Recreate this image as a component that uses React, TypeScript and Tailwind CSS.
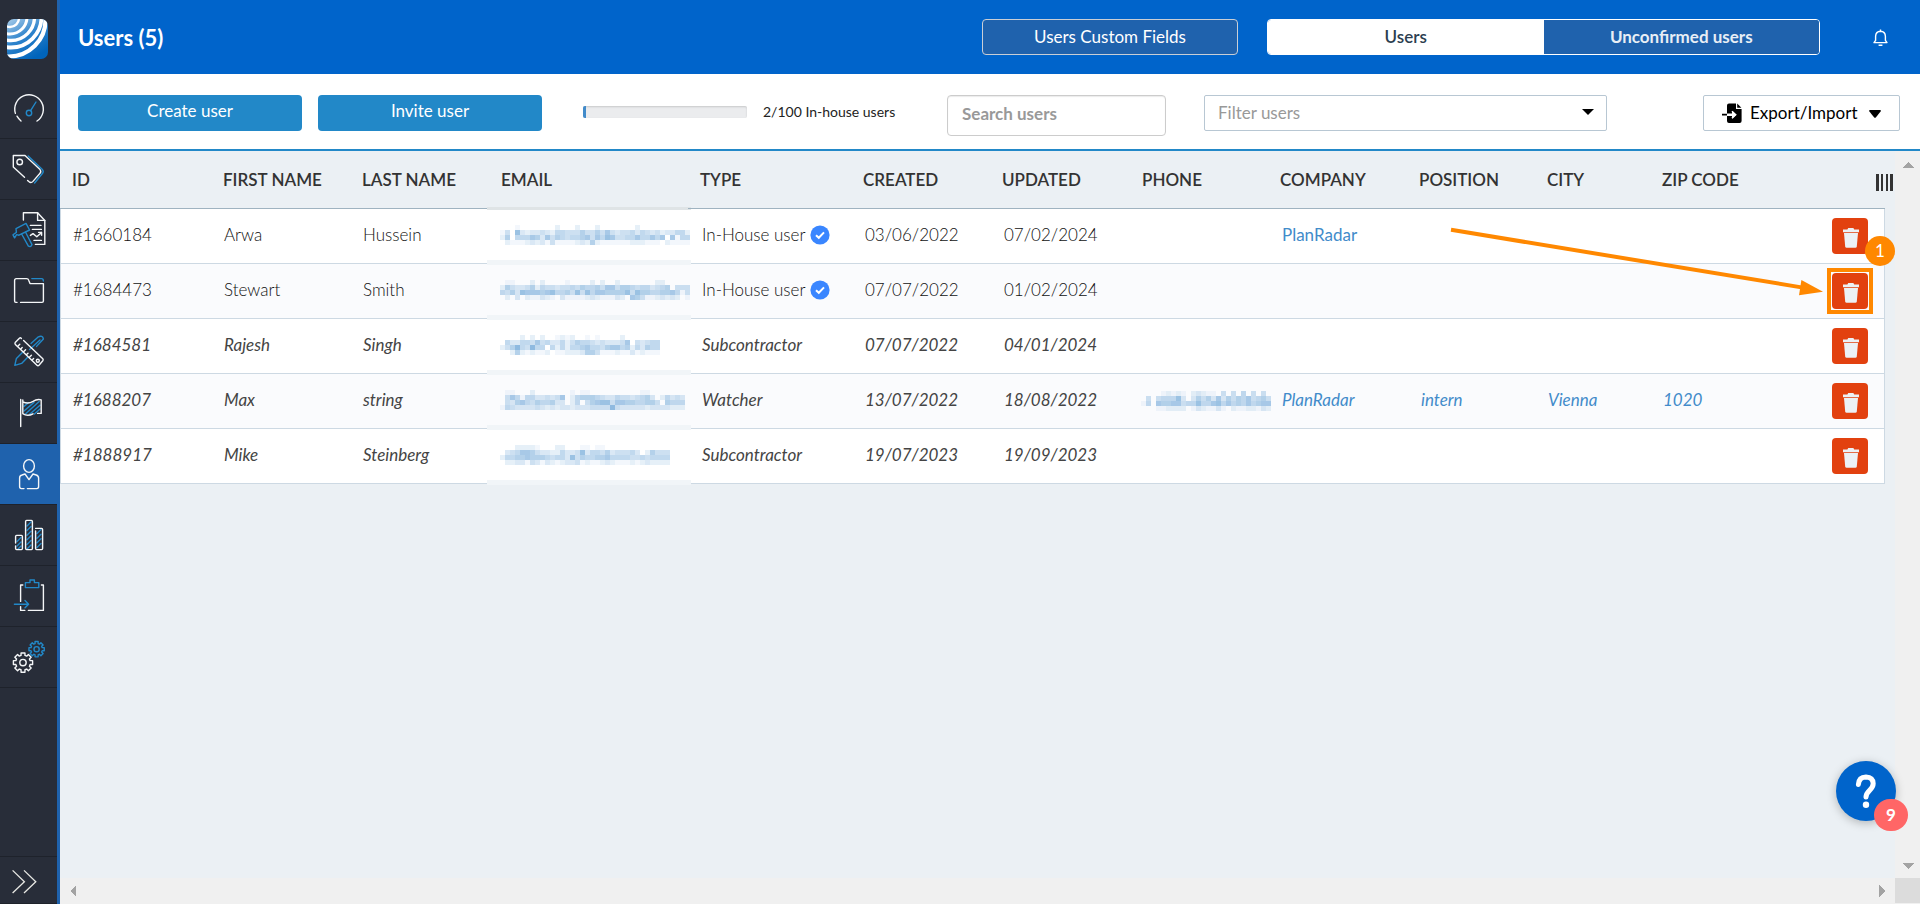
import type { ReactNode } from "react";

type Censored = string[];

type User = {
  id: string;
  firstName: string;
  lastName: string;
  email: Censored;
  type: string;
  created: string;
  updated: string;
  phone?: Censored;
  company?: string;
  position?: string;
  city?: string;
  zip?: string;
  active: boolean;
};

const users: User[] = [
  {
    id: "#1660184",
    firstName: "Arwa",
    lastName: "Hussein",
    email: [
      "00010000000200020002000000020000000000",
      "14083233432554446446474344535434233552",
      "26055576374654556747587445575575707155",
      "02111232314111123262111111222111021111",
    ],
    type: "In-House user",
    created: "03/06/2022",
    updated: "07/02/2024",
    company: "PlanRadar",
    active: true,
  },
  {
    id: "#1684473",
    firstName: "Stewart",
    lastName: "Smith",
    email: [
      "01100020200001000020200200000002200000",
      "26433462544344546556477466545534560444",
      "54638777678556484857766668486655667514",
      "02030211321031111232111320764112323201",
    ],
    type: "In-House user",
    created: "07/07/2022",
    updated: "01/02/2024",
    active: true,
  },
  {
    id: "#1684581",
    firstName: "Rajesh",
    lastName: "Singh",
    email: [
      "00002020200121200101000020000000",
      "05335547453352465543433347043455",
      "24695495505252556755467756253655",
      "00262121120112223664111211312111",
    ],
    type: "Subcontractor",
    created: "07/07/2022",
    updated: "04/01/2024",
    active: false,
  },
  {
    id: "#1688207",
    firstName: "Max",
    lastName: "string",
    email: [
      "0110002000000010110000000000110000000",
      "0475155334347025666543354434563025343",
      "0436754655633025046788477665566406555",
      "1543333432323323334444943333323333222",
    ],
    type: "Watcher",
    created: "13/07/2022",
    updated: "18/08/2022",
    phone: [
      "00001212102321104040504040",
      "04045558303646373646574564",
      "15076677455855785756575677",
      "00011222201321131021122132",
    ],
    company: "PlanRadar",
    position: "intern",
    city: "Vienna",
    zip: "1020",
    active: false,
  },
  {
    id: "#1888917",
    firstName: "Mike",
    lastName: "Steinberg",
    email: [
      "0002222100022000110110000000000000",
      "0345776433225334835546344453026444",
      "2556676665455384655667555544545555",
      "0223314313212334121123211121232222",
    ],
    type: "Subcontractor",
    created: "19/07/2023",
    updated: "19/09/2023",
    active: false,
  },
];

const Mosaic = ({ rows }: { rows: Censored }) => (
  <svg
    width={rows[0].length * 5}
    height={rows.length * 5}
    shapeRendering="crispEdges"
    fill="#8fbae0"
    aria-hidden="true"
  >
    {rows.map((row, y) =>
      row
        .split("")
        .map((value, x) =>
          value === "0" ? null : (
            <rect key={`${x}-${y}`} x={x * 5} y={y * 5} width="5" height="5" opacity={Number(value) / 9} />
          )
        )
    )}
  </svg>
);

const gear = (cx: number, cy: number, outer: number, inner: number) => {
  const points: string[] = [];
  for (let i = 0; i < 8; i++) {
    const angle = (i * Math.PI) / 4;
    [
      [-0.27, inner],
      [-0.2, outer],
      [0.2, outer],
      [0.27, inner],
    ].forEach(([offset, r]) => {
      points.push(`${cx + r * Math.cos(angle + offset)},${cy + r * Math.sin(angle + offset)}`);
    });
  }
  return points.join(" ");
};

const BLUE = "#2288c8";

const Icon = ({ children }: { children: ReactNode }) => (
  <svg
    width="57"
    height="60"
    viewBox="0 0 57 60"
    fill="none"
    stroke="#f4f6f8"
    strokeWidth="1.4"
    strokeLinecap="round"
    strokeLinejoin="round"
    aria-hidden="true"
  >
    {children}
  </svg>
);

const navItems: { label: string; icon: ReactNode }[] = [
  {
    label: "Dashboard",
    icon: (
      <Icon>
        <path d="M37 43A14.3 14.3 0 1 0 15.4 35.4" />
        <path d="M17 38.2Q18.6 41 21 43" />
        <g stroke={BLUE}>
          <circle cx="29" cy="35" r="2.7" />
          <path d="M30.6 32.6L36 24" />
        </g>
      </Icon>
    ),
  },
  {
    label: "Tickets",
    icon: (
      <Icon>
        <path d="M24.5 38.2L13.3 28V16.5H25L40 30.6Q41.6 32.4 40 34.2L33 42.4Q31 44.6 28.8 42.6L27.6 41.4" />
        <circle cx="19.7" cy="23" r="2.8" />
        <path stroke={BLUE} d="M28.2 17L42.4 30.6Q44 32.4 42.6 34.2L34.6 44" />
      </Icon>
    ),
  },
  {
    label: "Reports",
    icon: (
      <Icon>
        <path d="M23.4 20V12.8H37.6L44.8 20.4V44.4H35.4" />
        <path d="M37.6 12.8V20.4H44.8M30.4 25.4H41M32.4 29.4H41.4M34 40.4H41.4M30.4 35.4L33 33.6L36.8 36.8L41.6 32.4M38.6 32.4H41.6V35.2" />
        <g stroke={BLUE}>
          <path d="M16 28.6L26 23.4L29.6 30L19 35.2L16.6 34.6L14.6 37.8L13 34.8L16.4 32.4Z" />
          <path d="M21.6 34L28.4 46.2Q31 47.4 32 44.6L25.6 32.2" />
        </g>
      </Icon>
    ),
  },
  {
    label: "Documents",
    icon: (
      <Icon>
        <path d="M17 41.4H15.8Q14.6 41.4 14.6 40V19.4Q14.6 17.6 16.4 17.6H26.6Q28.2 17.6 28.8 19.4L30 22.6H43.4V40Q43.4 41.4 42 41.4H20.6" />
        <path stroke={BLUE} d="M31.8 17.6H41.6Q43.4 17.6 43.4 20" />
      </Icon>
    ),
  },
  {
    label: "Plans",
    icon: (
      <Icon>
        <path stroke={BLUE} d="M31 21.4L38.4 14.8Q42.6 13 43.4 17L36.6 24.4M22.4 30.6L16.4 36.4L14.8 43.4L21.6 41.4L27.4 35.6M29.6 27.6L40 18" />
        <path d="M15.2 20.6L19.4 16.2Q20.4 15.4 21.4 16.4M23.6 18.6L42.8 36.8Q43.6 37.8 42.8 38.8L39 43.2Q38 44.2 37 43.2L15.4 22.4Q14.6 21.6 15.2 20.6" />
        <path d="M17.8 24.2L19.8 22.2M20.8 27L22.2 25.6M23.6 29.8L25.6 27.8M26.6 32.6L28 31.2M29.4 35.2L31.4 33.2M32.2 38L33.6 36.6" />
        <circle cx="37.8" cy="38.8" r="1.5" />
      </Icon>
    ),
  },
  {
    label: "Milestones",
    icon: (
      <Icon>
        <path stroke={BLUE} d="M24 23.4L28.4 19.8M24 28L34 19.4M25.4 31L39.2 18.6M29.4 31.6L40 22.2M34.4 31L40 26" />
        <path d="M20.7 16.4V43.6M22.8 17V30.6Q27.4 33.8 33 30.8M22.8 18.8Q28 21.4 33 18.4Q37 15.6 41.2 16.8V30.4H37.6" />
      </Icon>
    ),
  },
  {
    label: "Users",
    icon: (
      <Icon>
        <ellipse cx="29" cy="22" rx="5.4" ry="6.4" />
        <path d="M24 44.6H21.4Q19.6 44.6 19.6 42.6V34Q19.6 31.6 22 31L25 30L29 35.6L33 30L36.2 31Q38.6 31.8 38.6 34V42.6Q38.6 44.6 36.8 44.6H27.4" />
      </Icon>
    ),
  },
  {
    label: "Statistics",
    icon: (
      <Icon>
        <path
          stroke={BLUE}
          d="M17 36.4L21 32.4M17 41L21 37M18 44L21 41M27 21L31 17M27 25.6L31 21.6M27 30.2L31 26.2M27 34.8L31 30.8M27 39.4L31 35.4M27 44L31 40M37 28.6L41 24.6M37 33.2L41 29.2M37 37.8L41 33.8M37 42.4L41 38.4"
        />
        <path d="M15.6 38V31.4Q15.6 30.4 16.6 30.4H21.4Q22.4 30.4 22.4 31.4V43.6Q22.4 44.6 21.4 44.6H16.6Q15.6 44.6 15.6 43.6V41" />
        <rect x="25.6" y="15.4" width="6.8" height="29.2" rx="1" />
        <path d="M35.6 23.4H41.6Q42.6 23.4 42.6 24.4V43.6Q42.6 44.6 41.6 44.6H36.6Q35.6 44.6 35.6 43.6V26" />
      </Icon>
    ),
  },
  {
    label: "Exports",
    icon: (
      <Icon>
        <path d="M22.8 19H20.6V35.4M20.6 40.6V44.4H24.8M28.4 44.4H43.4V19H41.4" />
        <g stroke={BLUE}>
          <path d="M25.4 21.6V16.6H30V14H34.4V16.6H38.8V21.6Z" />
          <path d="M14.4 38.2H28.4M25 34.6L28.6 38.2L25 41.8" />
        </g>
      </Icon>
    ),
  },
  {
    label: "Settings",
    icon: (
      <Icon>
        <polygon points={gear(23, 35.6, 9.8, 7.4)} />
        <circle cx="23" cy="35.6" r="3.2" />
        <g stroke={BLUE}>
          <polygon points={gear(36.6, 22.2, 7.8, 5.8)} />
          <circle cx="36.6" cy="22.2" r="2.6" />
        </g>
      </Icon>
    ),
  },
];

const Logo = () => (
  <svg width="41" height="40" viewBox="0 0 41 40" aria-hidden="true">
    <defs>
      <linearGradient id="logo-fill" x1="0" y1="0" x2="0.6" y2="1">
        <stop offset="0" stopColor="#a9cdea" />
        <stop offset="0.5" stopColor="#2f84cc" />
        <stop offset="1" stopColor="#0064bb" />
      </linearGradient>
      <clipPath id="logo-clip">
        <rect width="41" height="40" rx="7" />
      </clipPath>
    </defs>
    <g clipPath="url(#logo-clip)">
      <rect width="41" height="40" fill="url(#logo-fill)" />
      <g fill="none" stroke="#fff">
        <circle cx="3" cy="-1" r="9" strokeWidth="2.4" />
        <circle cx="3" cy="-2" r="17" strokeWidth="3" />
        <circle cx="4" cy="-2" r="23.5" strokeWidth="3.4" />
        <circle cx="4" cy="-2" r="30.5" strokeWidth="3.8" />
        <circle cx="2" cy="1" r="36.5" strokeWidth="4.2" />
      </g>
    </g>
  </svg>
);

const Sidebar = () => (
  <nav className="flex w-15 shrink-0 flex-col border-r-3 border-[#1f62ad] bg-[#282d39]">
    <a href="#home" aria-label="Home" className="flex h-[78px] items-start pt-[19px] pl-[7px]">
      <Logo />
    </a>
    {navItems.map((item) => (
      <a
        key={item.label}
        href={`#${item.label.toLowerCase()}`}
        aria-label={item.label}
        className={`block h-[61px] border-b border-[#1e222b] ${item.label === "Users" ? "bg-[#1f62ad]" : ""}`}
      >
        {item.icon}
      </a>
    ))}
    <button type="button" aria-label="Expand menu" className="mt-auto h-12 border-y border-[#1e222b]">
      <svg width="57" height="46" viewBox="0 0 57 46" fill="none" stroke="#e8e8e4" strokeWidth="1.3">
        <path d="M12.6 13.4L24.4 24.8L12.6 36M24 13.4L35.8 24.8L24 36" />
      </svg>
    </button>
  </nav>
);

const Header = () => (
  <header className="flex h-[74px] items-center bg-[#0064cb] pr-8 pl-[18px] text-[17px] text-white">
    <h1 className="mr-auto text-[22px] font-bold">Users (5)</h1>
    <button type="button" className="h-9 w-64 rounded border border-[#c9ced6] bg-[#1f62ad]">
      Users Custom Fields
    </button>
    <div className="ml-[29px] flex h-9 w-[553px] overflow-hidden rounded border border-white">
      <button type="button" className="flex-1 bg-white font-semibold text-[#2c3e50]">
        Users
      </button>
      <button type="button" className="flex-1 bg-[#1f62ad] font-bold text-[#e8eef5]">
        Unconfirmed users
      </button>
    </div>
    <button type="button" aria-label="Notifications" className="ml-[53px] pt-0.5">
      <svg width="15" height="18" viewBox="0 0 15 18" fill="none" stroke="#fff" strokeWidth="1.4" strokeLinejoin="round">
        <path d="M7.5 0.4V2.2M1 13.6H14L12.4 11.4V7.2Q12.2 2.4 7.5 2.2Q2.8 2.4 2.6 7.2V11.4ZM5.6 16.2H9.4" />
      </svg>
    </button>
  </header>
);

const Toolbar = () => (
  <div className="flex h-[77px] items-start border-b-2 border-[#2288c8] bg-white pt-[21px] pr-5 pl-[18px] text-[17px]">
    <button type="button" className="h-9 w-56 rounded bg-[#2288c8] pb-1 text-white">
      Create user
    </button>
    <button type="button" className="ml-4 h-9 w-56 rounded bg-[#2288c8] pb-1 text-white">
      Invite user
    </button>
    <div className="ml-[41px] flex h-[34px] items-center gap-4">
      <div
        role="progressbar"
        aria-label="In-house users"
        aria-valuenow={2}
        aria-valuemax={100}
        className="h-3 w-[164px] overflow-hidden rounded-xs bg-[#ebecee] shadow-[inset_0_1px_2px_rgba(0,0,0,0.15)]"
      >
        <div className="h-3 w-[2%] bg-[#428bca]" />
      </div>
      <span className="w-[168px] pb-0.5 text-[14px] whitespace-nowrap text-[#222]">2/100 In-house users</span>
    </div>
    <input
      type="text"
      aria-label="Search users"
      placeholder="Search users"
      className="ml-4 h-[41px] w-[219px] rounded border border-[#ccc] px-3.5 pb-1 font-bold shadow-[inset_0_1px_1px_rgba(0,0,0,0.08)] placeholder:text-[#999]"
    />
    <div className="relative ml-[38px] w-[403px]">
      <select
        aria-label="Filter users"
        className="h-9 w-full appearance-none rounded-xs border border-[#b8c7d3] bg-white px-[13px] text-[#999]"
      >
        <option>Filter users</option>
      </select>
      <svg width="12" height="6" viewBox="0 0 12 6" className="pointer-events-none absolute top-3.5 right-[13px]">
        <path d="M0 0H12L6 6Z" />
      </svg>
    </div>
    <button
      type="button"
      className="ml-auto flex h-9 w-[197px] items-center rounded-xs border border-[#b8c7d3] pb-px pl-[18px] text-black"
    >
      <svg width="20" height="20" viewBox="0 0 20 20" className="mr-2">
        <path d="M5 2.5Q5 0.5 7 0.5H14V6H19.6V18Q19.6 20 17.6 20H7Q5 20 5 18V13H10V15.6L14.4 11.8L10 8V10.4H5Z" />
        <path d="M15.2 0.6L19.4 4.8H15.2ZM0 10.8H5V12.6H0Z" />
        <path d="M5 11.7H13M10 8.2L13.6 11.7L10 15.2" fill="none" stroke="#fff" strokeWidth="1.6" />
      </svg>
      Export/Import
      <svg width="12" height="8" viewBox="0 0 12 8" className="mt-0.5 ml-3">
        <path d="M1 0H11Q12.4 0.4 11.6 1.6L7 7.2Q6 8.2 5 7.2L0.4 1.6Q-0.4 0.4 1 0Z" />
      </svg>
    </button>
  </div>
);

const VerifiedBadge = () => (
  <svg width="20" height="20" viewBox="0 0 20 20" className="ml-[5px] inline-block" aria-hidden="true">
    <circle cx="10" cy="10" r="9.6" fill="#3a86ff" />
    <path d="M6 10.2L8.8 12.8L14 7.4" fill="none" stroke="#fff" strokeWidth="2" />
  </svg>
);

const Callout = () => (
  <>
    <span className="absolute -inset-[5px] border-4 border-[#ff8800]" />
    <span className="absolute -top-[37px] -right-[27px] flex size-[30px] items-center justify-center rounded-full bg-[#ff8800] text-[17px] font-normal text-white">
      1
    </span>
    <svg
      width="376"
      height="76"
      viewBox="0 0 376 76"
      className="pointer-events-none absolute -top-12 right-11 max-w-none"
      aria-hidden="true"
    >
      <path d="M3 4.8L355 62.6" stroke="#ff8800" strokeWidth="4" />
      <path d="M375 66.8L351 70.2L353.4 55Z" fill="#ff8800" />
    </svg>
  </>
);

const DeleteButton = ({ highlighted }: { highlighted: boolean }) => (
  <div className="relative ml-auto size-9">
    <button
      type="button"
      aria-label="Delete user"
      className="flex size-9 items-center justify-center rounded bg-[#e2410f]"
    >
      <svg width="18" height="20" viewBox="0 0 18 20" fill="#ecf1f5" className="mt-1 ml-0.5">
        <path d="M1 1.4H5.4L6.2 0H11.4L12.2 1.4H17V4.2H1Z" />
        <path d="M2 5H16L14.8 18.6Q14.6 19.8 13.4 19.8H4.6Q3.4 19.8 3.2 18.6Z" />
      </svg>
    </button>
    {highlighted && <Callout />}
  </div>
);

const columns = [
  { label: "ID", width: "w-[150px]", padding: "pl-3" },
  { label: "FIRST NAME", width: "w-[139px]", padding: "pl-[13px]" },
  { label: "LAST NAME", width: "w-[139px]", padding: "pl-[13px]" },
  { label: "EMAIL", width: "w-[200px]", padding: "pl-[13px]" },
  { label: "TYPE", width: "w-[163px]", padding: "pl-3" },
  { label: "CREATED", width: "w-[139px]", padding: "pl-3" },
  { label: "UPDATED", width: "w-[139px]", padding: "pl-3" },
  { label: "PHONE", width: "w-[139px]", padding: "pl-[13px]" },
  { label: "COMPANY", width: "w-[139px]", padding: "pl-3" },
  { label: "POSITION", width: "w-[127px]", padding: "pl-3" },
  { label: "CITY", width: "w-[115px]", padding: "pl-[13px]" },
  { label: "ZIP CODE", width: "w-[120px]", padding: "pl-[13px]" },
];

const cell = "border-b border-[#cdd9e3] pl-[14px] pb-0.5";

const UserRow = ({ user, highlighted }: { user: User; highlighted: boolean }) => (
  <tr
    className={`h-[55px] odd:bg-white even:bg-[#fafbfd] ${
      user.active ? "font-light text-[#111]" : "text-[#444] italic"
    }`}
  >
    <td className="border-b border-l border-[#cdd9e3] pb-0.5 pl-3">{user.id}</td>
    <td className={cell}>{user.firstName}</td>
    <td className={cell}>{user.lastName}</td>
    <td className="relative border-b border-[#cdd9e3] pt-4 pl-3 align-top">
      <Mosaic rows={user.email} />
      <span className="absolute -right-[3px] -bottom-0.5 -left-px h-[5px] bg-[#f1f5f8]" />
    </td>
    <td className={cell}>
      <span className="flex items-center">
        {user.type}
        {user.active && <VerifiedBadge />}
      </span>
    </td>
    <td className={cell}>{user.created}</td>
    <td className={cell}>{user.updated}</td>
    <td className="border-b border-[#cdd9e3] pt-[17px] pl-3 align-top">{user.phone && <Mosaic rows={user.phone} />}</td>
    {[user.company, user.position, user.city, user.zip].map((value, i) => (
      <td key={i} className={`${cell} font-normal text-[#428bca]`}>
        {value && <a href={`#${value}`}>{value}</a>}
      </td>
    ))}
    <td className="border-r border-b border-[#cdd9e3] pr-4">
      <DeleteButton highlighted={highlighted} />
    </td>
  </tr>
);

const UsersTable = () => (
  <div className="min-w-0 flex-1 pr-2.5">
    <table className="w-full table-fixed border-separate border-spacing-0 text-left text-[17px] whitespace-nowrap text-[#333]">
      <thead>
        <tr className="h-[58px]">
          {columns.map((column) => (
            <th
              key={column.label}
              scope="col"
              className={`${column.width} ${column.padding} relative border-b border-[#9fb3c0] font-semibold`}
            >
              {column.label}
              {column.label === "EMAIL" && (
                <span className="absolute -right-[3px] -bottom-0.5 -left-px h-[3px] bg-[#dfe4e6]" />
              )}
            </th>
          ))}
          <th scope="col" className="border-b border-[#9fb3c0] pt-1.5">
            <button type="button" aria-label="Choose columns" className="-mr-2 ml-auto block">
              <svg width="17" height="17" viewBox="0 0 17 17" shapeRendering="crispEdges" fill="#333">
                <path d="M0 0H3V17H0ZM5 0H7V17H5ZM10 0H12V17H10ZM14 0H17V17H14Z" />
              </svg>
            </button>
          </th>
        </tr>
      </thead>
      <tbody>
        {users.map((user, i) => (
          <UserRow key={user.id} user={user} highlighted={i === 1} />
        ))}
      </tbody>
    </table>
  </div>
);

const Arrow = ({ d }: { d: string }) => (
  <svg width="12" height="12" viewBox="0 0 12 12" fill="#a3a3a3" shapeRendering="crispEdges" aria-hidden="true">
    <path d={d} />
  </svg>
);

const HelpButton = () => (
  <button
    type="button"
    aria-label="Help, 9 new"
    className="fixed right-6 bottom-[83px] flex size-15 items-center justify-center rounded-full bg-[#0064cb] shadow-[0_2px_10px_rgba(0,0,0,0.25)]"
  >
    <svg width="24" height="34" viewBox="0 0 24 34" fill="none" aria-hidden="true">
      <path d="M4.4 10.4Q4.8 3.2 12 3Q19 3.2 19.2 9.6Q19.2 13 15.6 16.4Q12.2 19.6 12 23" stroke="#fff" strokeWidth="5" strokeLinecap="round" />
      <circle cx="12" cy="30.8" r="3.2" fill="#fff" />
    </svg>
    <span className="absolute -right-3 -bottom-2.5 flex h-8 w-[34px] items-center justify-center rounded-full bg-[#ff6666] text-[17px] font-bold text-white">
      9
    </span>
  </button>
);

export default function App() {
  return (
    <div className="flex min-h-screen bg-[#ebf0f4] font-['Lato',sans-serif]">
      <Sidebar />
      <main className="flex min-w-0 flex-1 flex-col">
        <Header />
        <Toolbar />
        <div className="flex flex-1">
          <UsersTable />
          <div className="flex w-[25px] flex-col items-center justify-between bg-[#f0f0f0] pt-2 pb-1.5">
            <Arrow d="M6 3L12 9H0Z" />
            <Arrow d="M0 3H12L6 9Z" />
          </div>
        </div>
        <div className="flex h-[26px] bg-[#f0f0f0]">
          <div className="flex flex-1 items-center justify-between px-[7px]">
            <Arrow d="M9 0V12L3 6Z" />
            <Arrow d="M3 0L9 6L3 12Z" />
          </div>
          <div className="h-[25px] w-[25px] bg-[#dcdcdc]" />
        </div>
      </main>
      <HelpButton />
    </div>
  );
}
